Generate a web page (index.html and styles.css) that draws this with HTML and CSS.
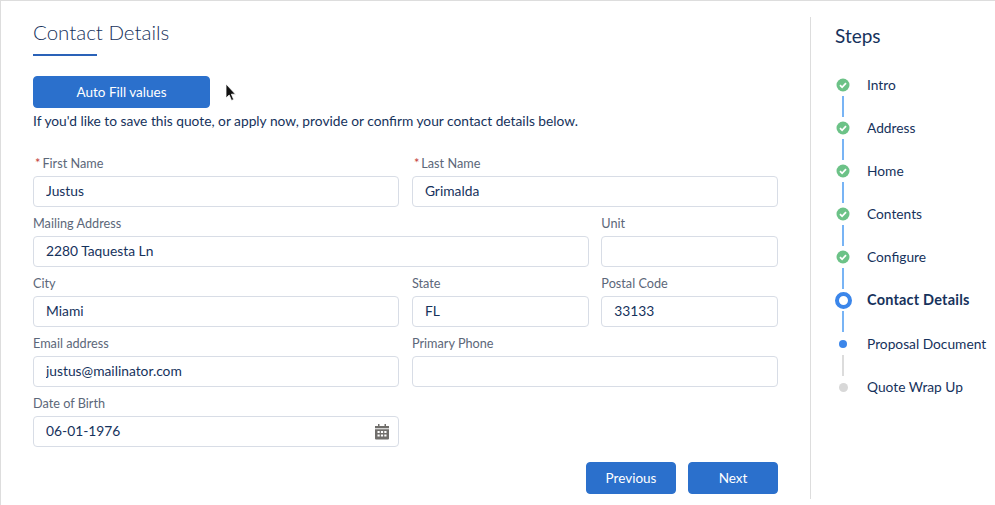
FILE: index.html
```html
<!DOCTYPE html>
<html lang="en">
<head>
    <meta charset="UTF-8">
    <meta name="viewport" content="width=device-width, initial-scale=1.0">
    <title>Contact Details</title>
    <link rel="stylesheet" href="styles.css">
</head>
<body>
    <div class="page">
        <div class="main">
            <div class="header">
                <h1>Contact Details</h1>
            </div>
            <button class="btn btn-fill">Auto Fill values</button>
            <svg class="cursor" width="12" height="19" viewBox="0 0 12 19">
                <path d="M1 1v14l3.2-3 2.3 5.5 2.2-1-2.3-5.3H10.500z" fill="#111" stroke="#fff" stroke-width="0.8"/>
            </svg>
            <p class="intro">If you'd like to save this quote, or apply now, provide or confirm your contact details below.</p>

            <div class="form">
                <div class="field span-2">
                    <label><span class="req">*</span>First Name</label>
                    <input type="text" value="Justus">
                </div>
                <div class="field span-2">
                    <label><span class="req">*</span>Last Name</label>
                    <input type="text" value="Grimalda">
                </div>
                <div class="field span-3">
                    <label>Mailing Address</label>
                    <input type="text" value="2280 Taquesta Ln">
                </div>
                <div class="field">
                    <label>Unit</label>
                    <input type="text" value="">
                </div>
                <div class="field span-2">
                    <label>City</label>
                    <input type="text" value="Miami">
                </div>
                <div class="field">
                    <label>State</label>
                    <input type="text" value="FL">
                </div>
                <div class="field">
                    <label>Postal Code</label>
                    <input type="text" value="33133">
                </div>
                <div class="field span-2">
                    <label>Email address</label>
                    <input type="text" value="justus@mailinator.com">
                </div>
                <div class="field span-2">
                    <label>Primary Phone</label>
                    <input type="text" value="">
                </div>
                <div class="field span-2">
                    <label>Date of Birth</label>
                    <div class="date-wrap">
                        <input type="text" value="06-01-1976">
                        <svg class="date-icon" width="14" height="16" viewBox="0 0 14 16">
                            <path d="M3 0h1.500v2H3zM9.500 0H11v2H9.500z" fill="#706e6b"/>
                            <path d="M0 2h14v2.300H0z" fill="#706e6b"/>
                            <path fill-rule="evenodd" fill="#706e6b" d="M0 5.200h14v9.300a1 1 0 0 1-1 1H1a1 1 0 0 1-1-1zM2.500 7v2h2.200V7zM5.900 7v2h2.200V7zM9.300 7v2h2.200V7zM2.500 10.500v2h2.200v-2zM5.900 10.500v2h2.200v-2zM9.300 10.500v2h2.200v-2z"/>
                        </svg>
                    </div>
                </div>
            </div>

            <div class="actions">
                <button class="btn btn-nav">Previous</button>
                <button class="btn btn-nav">Next</button>
            </div>
        </div>

        <div class="sidebar">
            <h2>Steps</h2>
            <div class="steps">
                <div class="step">
                    <div class="rail">
                        <div class="marker"><svg width="14" height="14" viewBox="0 0 14 14"><circle cx="7" cy="7" r="6.500" fill="#6cc287"/><path d="M4 7.200l2.100 2.100L10 5.200" fill="none" stroke="#fff" stroke-width="1.800"/></svg></div>
                        <div class="line"></div>
                    </div>
                    <span class="step-name">Intro</span>
                </div>
                <div class="step">
                    <div class="rail">
                        <div class="marker"><svg width="14" height="14" viewBox="0 0 14 14"><circle cx="7" cy="7" r="6.500" fill="#6cc287"/><path d="M4 7.200l2.100 2.100L10 5.200" fill="none" stroke="#fff" stroke-width="1.800"/></svg></div>
                        <div class="line"></div>
                    </div>
                    <span class="step-name">Address</span>
                </div>
                <div class="step">
                    <div class="rail">
                        <div class="marker"><svg width="14" height="14" viewBox="0 0 14 14"><circle cx="7" cy="7" r="6.500" fill="#6cc287"/><path d="M4 7.200l2.100 2.100L10 5.200" fill="none" stroke="#fff" stroke-width="1.800"/></svg></div>
                        <div class="line"></div>
                    </div>
                    <span class="step-name">Home</span>
                </div>
                <div class="step">
                    <div class="rail">
                        <div class="marker"><svg width="14" height="14" viewBox="0 0 14 14"><circle cx="7" cy="7" r="6.500" fill="#6cc287"/><path d="M4 7.200l2.100 2.100L10 5.200" fill="none" stroke="#fff" stroke-width="1.800"/></svg></div>
                        <div class="line"></div>
                    </div>
                    <span class="step-name">Contents</span>
                </div>
                <div class="step">
                    <div class="rail">
                        <div class="marker"><svg width="14" height="14" viewBox="0 0 14 14"><circle cx="7" cy="7" r="6.500" fill="#6cc287"/><path d="M4 7.200l2.100 2.100L10 5.200" fill="none" stroke="#fff" stroke-width="1.800"/></svg></div>
                        <div class="line"></div>
                    </div>
                    <span class="step-name">Configure</span>
                </div>
                <div class="step step-current">
                    <div class="rail">
                        <div class="marker"><div class="dot-active"></div></div>
                        <div class="line"></div>
                    </div>
                    <span class="step-name active">Contact Details</span>
                </div>
                <div class="step">
                    <div class="rail">
                        <div class="marker"><div class="dot-next"></div></div>
                        <div class="line line-grey"></div>
                    </div>
                    <span class="step-name">Proposal Document</span>
                </div>
                <div class="step">
                    <div class="rail">
                        <div class="marker"><div class="dot-todo"></div></div>
                    </div>
                    <span class="step-name">Quote Wrap Up</span>
                </div>
            </div>
        </div>
    </div>
</body>
</html>
```

FILE: styles.css
```css
* {
    box-sizing: border-box;
}
html, body {
    margin: 0;
    height: 100%;
    overflow: hidden;
}
body {
    font-family: Lato, "Open Sans", sans-serif;
    color: #16325c;
    background-color: #fff;
}
.page {
    display: flex;
    height: 505px;
    border-top: 1px solid #ddd;
    border-left: 1px solid #ddd;
}
.main {
    position: relative;
    width: 809px;
    padding: 0 32px 0 32px;
}
.header {
    height: 55px;
    width: 64px;
    border-bottom: 2px solid #2a62b8;
    white-space: nowrap;
}
h1 {
    margin: 0;
    padding-top: 16px;
    font-size: 20.500px;
    line-height: 30px;
    font-weight: 300;
}
.btn {
    font-family: inherit;
    font-size: 13.500px;
    color: #fff;
    background-color: #2b70cc;
    border: 1px solid #2b70cc;
    border-radius: 4px;
    height: 32px;
    padding: 0 0 1px;
}
.btn-fill {
    display: block;
    margin-top: 20px;
    width: 177px;
}
.cursor {
    position: absolute;
    left: 224px;
    top: 82px;
}
.intro {
    margin: 4px 0 0;
    font-size: 13.750px;
    line-height: 17px;
}
.form {
    display: grid;
    grid-template-columns: repeat(4, 1fr);
    column-gap: 12.800px;
    row-gap: 7px;
    margin-top: 25px;
}
.field {
    min-width: 0;
}
.span-2 {
    grid-column: span 2;
}
.span-3 {
    grid-column: span 3;
}
.field label {
    display: block;
    height: 22px;
    font-size: 12.700px;
    line-height: 18px;
    color: #5c6779;
}
.req {
    color: #c23934;
    margin: 0 2px 0 2px;
}
.field input {
    display: block;
    width: 100%;
    height: 31px;
    padding: 0 12px 2px;
    font-family: inherit;
    font-size: 13.800px;
    color: #16325c;
    border: 1px solid #d8dde6;
    border-radius: 4px;
    outline: none;
}
.date-wrap {
    position: relative;
}
.date-icon {
    position: absolute;
    right: 10px;
    top: 8px;
}
.actions {
    display: flex;
    justify-content: flex-end;
    gap: 12px;
    margin-top: 15px;
}
.btn-nav {
    width: 90px;
}
.sidebar {
    margin-top: 16px;
    height: 482px;
    flex: 1;
    border-left: 1px solid #ddd;
    padding-left: 24px;
}
h2 {
    margin: 0;
    padding-top: 6px;
    font-size: 19px;
    line-height: 26px;
    font-weight: 400;
}
.steps {
    margin-top: 29px;
}
.step {
    display: flex;
    height: 43px;
    gap: 16px;
}
.step-current {
    height: 44px;
}
.rail {
    display: flex;
    flex-direction: column;
    align-items: center;
    width: 16px;
}
.marker {
    display: flex;
    align-items: center;
    justify-content: center;
    width: 14px;
    height: 14px;
    flex-shrink: 0;
}
.line {
    width: 2px;
    height: 21px;
    margin-top: 4px;
    background-color: #78b4f5;
}
.line-grey {
    background-color: #dcdcdc;
}
.dot-active {
    flex-shrink: 0;
    width: 17px;
    height: 17px;
    border: 4px solid #3b86ea;
    border-radius: 50%;
    background-color: #fff;
}
.dot-next {
    flex-shrink: 0;
    width: 8px;
    height: 8px;
    border-radius: 50%;
    background-color: #3b86ea;
}
.dot-todo {
    flex-shrink: 0;
    width: 9px;
    height: 9px;
    border-radius: 50%;
    background-color: #d8d8d8;
}
.step-name {
    font-size: 13.750px;
    line-height: 13px;
    white-space: nowrap;
}
.step-name.active {
    font-size: 14.500px;
    font-weight: 700;
    letter-spacing: 0.200px;
}
```
